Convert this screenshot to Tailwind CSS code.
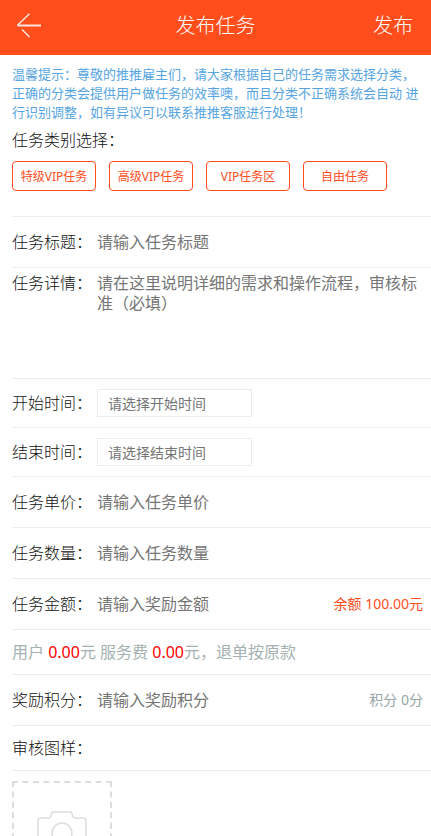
<!DOCTYPE html>
<html lang="zh-CN">
<head>
    <meta charset="UTF-8">
    <meta name="viewport" content="width=device-width, initial-scale=1.0">
    <title>发布任务</title>
    <script src="https://cdn.jsdelivr.net/npm/@tailwindcss/browser@4"></script>
</head>
<body class="h-screen overflow-y-auto [scrollbar-width:none] bg-white text-base leading-5 text-[#333] font-['Noto_Sans','Noto_Sans_CJK_SC',sans-serif]">
    <header class="grid grid-cols-3 items-center h-[55px] px-4 pb-1 bg-[#ff4d1c] text-white text-xl font-light">
        <a href="index.html" aria-label="返回" class="justify-self-start">
            <svg class="w-[26px] h-[26px]" viewBox="0 0 26 26" fill="none" stroke="#fff" stroke-opacity="0.85">
                <path d="M25 12.5H1.5" stroke-width="2"/>
                <path d="M13.5 0.8L1.5 12.2" stroke-width="1.5"/>
                <path d="M6 16.5L13.5 24" stroke-width="1.5"/>
            </svg>
        </a>
        <h1 class="text-center font-light">发布任务</h1>
        <button type="submit" form="task" class="justify-self-end pr-0.5">发布</button>
    </header>

    <form id="task" class="pl-3">
        <p class="pt-2.5 pr-2 text-[13px] leading-[19px] text-[#56a5e2]">温馨提示：尊敬的推推雇主们，请大家根据自己的任务需求选择分类，正确的分类会提供用户做任务的效率噢，而且分类不正确系统会自动 进行识别调整，如有异议可以联系推推客服进行处理！</p>

        <!-- 任务类别 -->
        <section class="pb-[25px] border-b border-[#ececec]">
            <h2 class="pt-2 pb-[11px] font-light text-[#111]">任务类别选择：</h2>
            <div class="flex gap-[13px] text-xs text-[#ff4d1c]">
                <button type="button" class="w-[84px] h-[30px] pt-0.5 border border-[#ff4d1c] rounded">特级VIP任务</button>
                <button type="button" class="w-[84px] h-[30px] pt-0.5 border border-[#ff4d1c] rounded">高级VIP任务</button>
                <button type="button" class="w-[84px] h-[30px] pt-0.5 border border-[#ff4d1c] rounded">VIP任务区</button>
                <button type="button" class="w-[84px] h-[30px] pt-0.5 border border-[#ff4d1c] rounded">自由任务</button>
            </div>
        </section>

        <div class="flex items-center h-[51px] border-b border-[#ececec]">
            <label for="title" class="w-[85px] shrink-0 font-light text-[#111]">任务标题：</label>
            <input id="title" type="text" placeholder="请输入任务标题" class="flex-1 min-w-0 outline-none placeholder:text-[#757575]">
        </div>
        <div class="flex h-[111px] pt-[5px] border-b border-[#ececec]">
            <label for="detail" class="w-[85px] shrink-0 font-light text-[#111]">任务详情：</label>
            <textarea id="detail" placeholder="请在这里说明详细的需求和操作流程，审核标准（必填）" class="flex-1 min-w-0 mr-2 resize-none outline-none placeholder:text-[#757575]"></textarea>
        </div>

        <!-- 时间 -->
        <div class="flex items-center h-[49px] border-b border-[#ececec]">
            <label for="start" class="w-[85px] shrink-0 font-light text-[#111]">开始时间：</label>
            <input id="start" type="text" placeholder="请选择开始时间" class="w-[155px] h-7 px-2.5 border border-[#ececec] text-sm outline-none placeholder:text-[#757575]">
        </div>
        <div class="flex items-center h-[49px] border-b border-[#ececec]">
            <label for="end" class="w-[85px] shrink-0 font-light text-[#111]">结束时间：</label>
            <input id="end" type="text" placeholder="请选择结束时间" class="w-[155px] h-7 px-2.5 border border-[#ececec] text-sm outline-none placeholder:text-[#757575]">
        </div>

        <!-- 金额 -->
        <div class="flex items-center h-[51px] border-b border-[#ececec]">
            <label for="price" class="w-[85px] shrink-0 font-light text-[#111]">任务单价：</label>
            <input id="price" type="text" placeholder="请输入任务单价" class="flex-1 min-w-0 outline-none placeholder:text-[#757575]">
        </div>
        <div class="flex items-center h-[51px] border-b border-[#ececec]">
            <label for="count" class="w-[85px] shrink-0 font-light text-[#111]">任务数量：</label>
            <input id="count" type="text" placeholder="请输入任务数量" class="flex-1 min-w-0 outline-none placeholder:text-[#757575]">
        </div>
        <div class="flex items-center h-[51px] pr-2 border-b border-[#ececec]">
            <label for="amount" class="w-[85px] shrink-0 font-light text-[#111]">任务金额：</label>
            <input id="amount" type="text" placeholder="请输入奖励金额" class="flex-1 min-w-0 outline-none placeholder:text-[#757575]">
            <span class="text-sm text-[#ff4d1c]">余额 100.00元</span>
        </div>
        <p class="flex items-center h-[45px] border-b border-[#ececec] text-[#a3b1b1]"><span>用户 <span class="text-[#f00]">0.00</span>元 服务费 <span class="text-[#f00]">0.00</span>元，退单按原款</span></p>
        <div class="flex items-center h-[51px] pr-2 border-b border-[#ececec]">
            <label for="points" class="w-[85px] shrink-0 font-light text-[#111]">奖励积分：</label>
            <input id="points" type="text" placeholder="请输入奖励积分" class="flex-1 min-w-0 outline-none placeholder:text-[#757575]">
            <span class="text-sm text-[#95a5a6]">积分 0分</span>
        </div>

        <!-- 图样 -->
        <h2 class="flex items-center h-[45px] border-b border-[#ececec] font-light text-[#111]">审核图样：</h2>
        <button type="button" aria-label="上传图样" class="flex items-center justify-center size-[100px] my-2.5 border-2 border-dashed border-[#ddd]">
            <svg class="w-[50px] h-[42px]" viewBox="0 0 50 42" fill="none" stroke="#ddd" stroke-width="1.5">
                <path d="M3.5 8H12C13 8 13.3 7.5 13.6 6.5L15.2 2H34.2L36 6.5C36.4 7.6 36.8 8 38 8H46Q49 8 49 11V38Q49 41 46 41H4Q1 41 1 38V11Q1 8 3.5 8Z"/>
                <circle cx="25" cy="23" r="10"/>
            </svg>
        </button>
    </form>
</body>
</html>
